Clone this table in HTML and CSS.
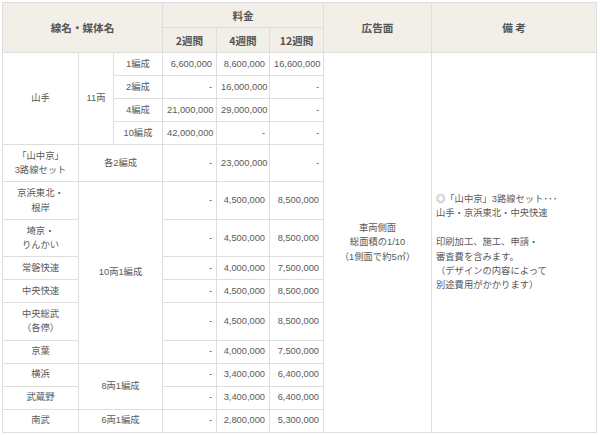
FILE: index.html
```html
<!DOCTYPE html>
<html lang="ja">
<head>
<meta charset="utf-8">
<link rel="stylesheet" href="styles.css">
</head>
<body>
<table class="price">
  <colgroup>
    <col class="c1"><col class="c2"><col class="c3"><col class="c4"><col class="c5"><col class="c6"><col class="c7"><col class="c8">
  </colgroup>
  <thead>
    <tr>
      <th colspan="3" rowspan="2">線名・媒体名</th>
      <th colspan="3">料金</th>
      <th rowspan="2">広告面</th>
      <th rowspan="2">備 考</th>
    </tr>
    <tr>
      <th>2週間</th>
      <th>4週間</th>
      <th>12週間</th>
    </tr>
  </thead>
  <tbody>
    <tr>
      <td rowspan="4" class="ctr">山手</td>
      <td rowspan="4" class="ctr">11両</td>
      <td class="ctr">1編成</td>
      <td class="num">6,600,000</td>
      <td class="num">8,600,000</td>
      <td class="num">16,600,000</td>
      <td rowspan="14" class="ctr">車両側面<br>総面積の1/10<br>（1側面で約5㎡）</td>
      <td rowspan="14" class="note">◎「山中京」3路線セット･･･<br>山手・京浜東北・中央快速<br><br>印刷加工、施工、申請・<br>審査費を含みます。<br>（デザインの内容によって<br>別途費用がかかります）</td>
    </tr>
    <tr>
      <td class="ctr">2編成</td>
      <td class="num">-</td>
      <td class="num">16,000,000</td>
      <td class="num">-</td>
    </tr>
    <tr>
      <td class="ctr">4編成</td>
      <td class="num">21,000,000</td>
      <td class="num">29,000,000</td>
      <td class="num">-</td>
    </tr>
    <tr>
      <td class="ctr">10編成</td>
      <td class="num">42,000,000</td>
      <td class="num">-</td>
      <td class="num">-</td>
    </tr>
    <tr>
      <td class="ctr">「山中京」<br>3路線セット</td>
      <td colspan="2" class="ctr">各2編成</td>
      <td class="num">-</td>
      <td class="num">23,000,000</td>
      <td class="num">-</td>
    </tr>
    <tr>
      <td class="ctr">京浜東北・<br>根岸</td>
      <td colspan="2" rowspan="6" class="ctr">10両1編成</td>
      <td class="num">-</td>
      <td class="num">4,500,000</td>
      <td class="num">8,500,000</td>
    </tr>
    <tr>
      <td class="ctr">埼京・<br>りんかい</td>
      <td class="num">-</td>
      <td class="num">4,500,000</td>
      <td class="num">8,500,000</td>
    </tr>
    <tr>
      <td class="ctr">常磐快速</td>
      <td class="num">-</td>
      <td class="num">4,000,000</td>
      <td class="num">7,500,000</td>
    </tr>
    <tr>
      <td class="ctr">中央快速</td>
      <td class="num">-</td>
      <td class="num">4,500,000</td>
      <td class="num">8,500,000</td>
    </tr>
    <tr>
      <td class="ctr">中央総武<br>（各停）</td>
      <td class="num">-</td>
      <td class="num">4,500,000</td>
      <td class="num">8,500,000</td>
    </tr>
    <tr>
      <td class="ctr">京葉</td>
      <td class="num">-</td>
      <td class="num">4,000,000</td>
      <td class="num">7,500,000</td>
    </tr>
    <tr>
      <td class="ctr">横浜</td>
      <td colspan="2" rowspan="2" class="ctr">8両1編成</td>
      <td class="num">-</td>
      <td class="num">3,400,000</td>
      <td class="num">6,400,000</td>
    </tr>
    <tr>
      <td class="ctr">武蔵野</td>
      <td class="num">-</td>
      <td class="num">3,400,000</td>
      <td class="num">6,400,000</td>
    </tr>
    <tr>
      <td class="ctr">南武</td>
      <td colspan="2" class="ctr">6両1編成</td>
      <td class="num">-</td>
      <td class="num">2,800,000</td>
      <td class="num">5,300,000</td>
    </tr>
  </tbody>
</table>
</body>
</html>
```

FILE: styles.css
```css
html, body {
  margin: 0;
  padding: 0;
  background: #ffffff;
}

body {
  padding: 2px;
  font-family: "Liberation Sans", "Noto Sans CJK JP", sans-serif;
  color: #5a5a5a;
}

.price {
  border-collapse: collapse;
  table-layout: fixed;
  width: 594px;
  font-size: 9.3px;
  line-height: 14.4px;
}

.c1 { width: 76px; }
.c2 { width: 35px; }
.c3 { width: 49px; }
.c4 { width: 54px; }
.c5 { width: 53px; }
.c6 { width: 54px; }
.c7 { width: 108px; }
.c8 { width: 165px; }

.price th,
.price td {
  border: 1px solid #dedede;
  vertical-align: middle;
}

.price th {
  background: #f2efe9;
  color: #555555;
  font-family: "Noto Sans CJK JP", sans-serif;
  font-weight: bold;
  font-size: 10.6px;
  line-height: 15px;
  padding: 4.5px 4px;
  text-align: center;
}

.price td {
  padding: 3.8px 4px;
}

.ctr {
  text-align: center;
}

.num {
  text-align: right;
}

.note {
  text-align: left;
}
```
